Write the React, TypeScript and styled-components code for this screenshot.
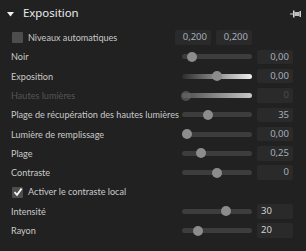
import React from "react";
import styled, { createGlobalStyle } from "styled-components";

const Global = createGlobalStyle`
  html, body { margin: 0; padding: 0; background: #212121; }
  body { font-family: Lato, "Noto Sans", sans-serif; }
`;

const Panel = styled.div`
  width: 306px;
  height: 251px;
  box-sizing: border-box;
  background: #212121;
  padding: 0 13px 0 11px;
  display: flex;
  flex-direction: column;
  overflow: hidden;
`;

const Header = styled.div`
  height: 28px;
  display: flex;
  align-items: center;
  margin-left: -4px;
  margin-right: -8px;
`;

const Title = styled.span`
  flex: 1;
  margin-left: 9px;
  font-family: "Noto Sans", sans-serif;
  font-size: 11.4px;
  color: #ececec;
  line-height: 1;
  padding-bottom: 2px;
`;

const Row = styled.div`
  height: 19.3px;
  display: flex;
  align-items: center;
`;

const Label = styled.span<{ $dim?: boolean }>`
  flex: 1 1 0;
  min-width: 0;
  font-size: 9.1px;
  color: ${(p) => (p.$dim ? "#555" : "#c9c9c9")};
  white-space: nowrap;
  overflow: visible;
  line-height: 1;
`;

const Check = styled.span<{ $on?: boolean }>`
  width: 11px;
  height: 11px;
  margin: 0 5px 0 1px;
  background: #4d4d4d;
  border-radius: 1px;
  display: flex;
  align-items: center;
  justify-content: center;
  flex-shrink: 0;
`;

const Track = styled.div<{ $kind?: "plain" | "grad" | "dimgrad" }>`
  position: relative;
  width: 70px;
  height: 5px;
  border-radius: 3px;
  margin-right: 5px;
  flex-shrink: 0;
  background: ${(p) =>
    p.$kind === "grad"
      ? "linear-gradient(to right, #2c2c2c, #f0f0f0)"
      : p.$kind === "dimgrad"
      ? "linear-gradient(to right, #4a4a4a, #c8c8c8)"
      : "#3d3d3d"};
`;

const Knob = styled.div<{ $dim?: boolean }>`
  position: absolute;
  top: 50%;
  width: 10px;
  height: 10px;
  margin: -5px 0 0 -5px;
  border-radius: 50%;
  background: ${(p) => (p.$dim ? "#6a6a6a" : "#8c8c8c")};
  opacity: ${(p) => (p.$dim ? 0.6 : 1)};
`;

const Value = styled.div<{ $align?: "left" | "right"; $dim?: boolean }>`
  width: 36px;
  height: 14.5px;
  box-sizing: border-box;
  background: #2a2a2a;
  border-radius: 2px;
  font-family: "Noto Sans", sans-serif;
  font-size: 9.5px;
  line-height: 14.5px;
  color: ${(p) => (p.$dim ? "#4a4a4a" : p.$align === "left" ? "#d0d0d0" : "#a6aebb")};
  text-align: ${(p) => p.$align ?? "right"};
  padding: 0 4px;
  flex-shrink: 0;
`;

const Pair = styled.div`
  display: flex;
  gap: 5px;
  margin-right: 41px;
`;

const Caret = () => (
  <svg width="7" height="5" viewBox="0 0 7 5">
    <polygon points="0,0 7,0 3.5,4.5" fill="#f0f0f0" />
  </svg>
);

const Pin = () => (
  <svg width="11" height="8" viewBox="0 0 11 8">
    <rect x="0" y="3.5" width="3" height="1" fill="#cfcfcf" />
    <rect x="3" y="0.5" width="1.5" height="7" fill="#d8d8d8" />
    <rect x="4.5" y="2" width="5" height="4" fill="#bdbdbd" />
    <rect x="9.5" y="1" width="1.5" height="6" fill="#d0d0d0" />
  </svg>
);

const Tick = () => (
  <svg width="10" height="10" viewBox="0 0 10 10">
    <path d="M1.5 5.2 L4 7.8 L8.6 1.6" stroke="#f4f4f4" strokeWidth="1.8" fill="none" />
  </svg>
);

type SliderRow = {
  label: string;
  pos: number;
  value: string;
  kind?: "plain" | "grad" | "dimgrad";
  dim?: boolean;
  align?: "left" | "right";
};

const top: SliderRow[] = [
  { label: "Noir", pos: 10, value: "0,00" },
  { label: "Exposition", pos: 35, value: "0,00", kind: "grad" },
  { label: "Hautes lumières", pos: 4, value: "0", kind: "dimgrad", dim: true },
  { label: "Plage de récupération des hautes lumières", pos: 26, value: "35" },
  { label: "Lumière de remplissage", pos: 5, value: "0,00" },
  { label: "Plage", pos: 19, value: "0,25" },
  { label: "Contraste", pos: 35, value: "0" },
];

const bottom: SliderRow[] = [
  { label: "Intensité", pos: 44, value: "30", align: "left" },
  { label: "Rayon", pos: 16, value: "20", align: "left" },
];

const Slider = ({ r }: { r: SliderRow }) => (
  <Row>
    <Label $dim={r.dim}>{r.label}</Label>
    <Track $kind={r.kind}>
      <Knob $dim={r.dim} style={{ left: r.pos }} />
    </Track>
    <Value $align={r.align} $dim={r.dim}>
      {r.value}
    </Value>
  </Row>
);

export default function App() {
  return (
    <>
      <Global />
      <Panel>
        <Header>
          <Caret />
          <Title>Exposition</Title>
          <Pin />
        </Header>
        <Row>
          <Check />
          <Label>Niveaux automatiques</Label>
          <Pair>
            <Value>0,200</Value>
            <Value>0,200</Value>
          </Pair>
        </Row>
        {top.map((r) => (
          <Slider key={r.label} r={r} />
        ))}
        <Row>
          <Check $on>
            <Tick />
          </Check>
          <Label>Activer le contraste local</Label>
        </Row>
        {bottom.map((r) => (
          <Slider key={r.label} r={r} />
        ))}
      </Panel>
    </>
  );
}
